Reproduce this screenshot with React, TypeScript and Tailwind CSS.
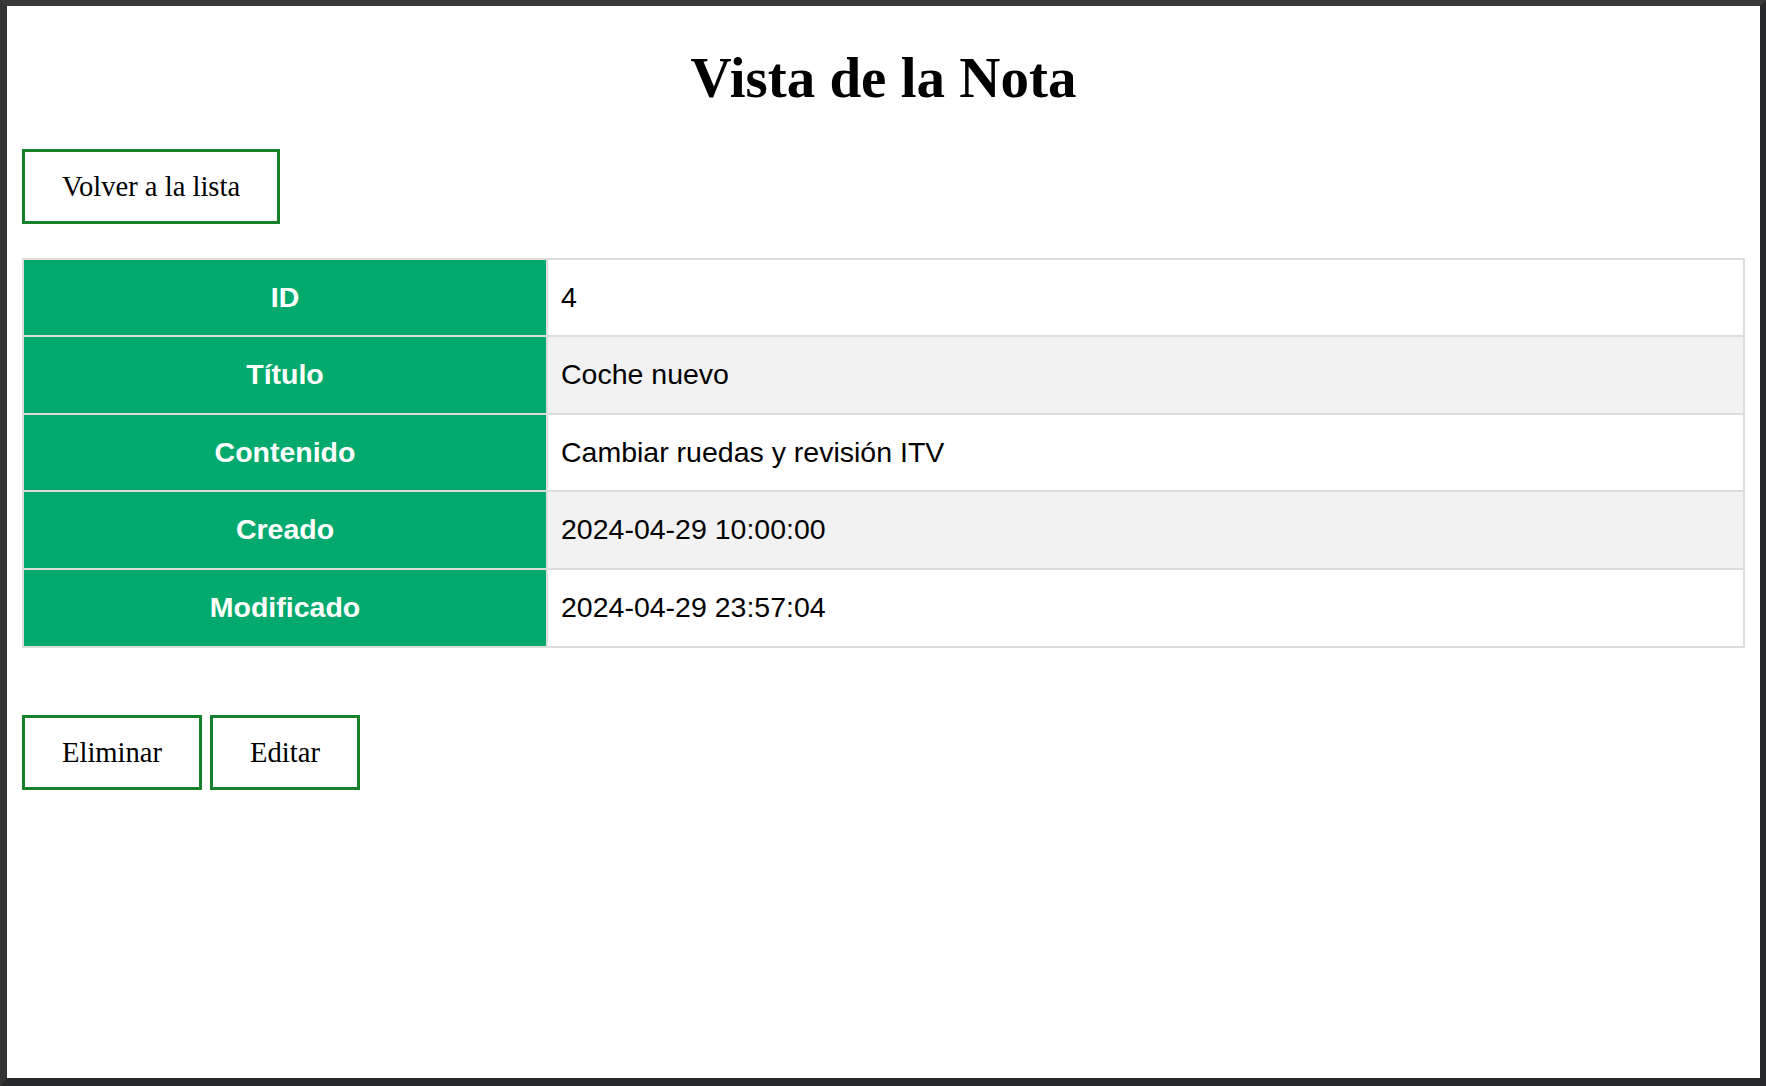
const rows = [
  { label: "ID", value: "4" },
  { label: "Título", value: "Coche nuevo" },
  { label: "Contenido", value: "Cambiar ruedas y revisión ITV" },
  { label: "Creado", value: "2024-04-29 10:00:00" },
  { label: "Modificado", value: "2024-04-29 23:57:04" },
];

const GreenButton = ({ text }: { text: string }) => {
  return (
    <button className="border-[3px] border-[#17802b] bg-white px-[37px] py-[18px] text-[28.6px] leading-[33px] text-black font-['Liberation_Serif',serif]">
      {text}
    </button>
  );
};

export default function App() {
  return (
    <div className="h-[1086px] w-[1766px] bg-[#28292b] border-t-[6px] border-t-[#3a3a3a] border-l-[7px] border-l-[#353535] border-r-[6px] border-r-[#28292b] border-b-[8px] border-b-[#28292b]">
      <div className="h-full w-full bg-white px-[15px] pt-[39px] font-['Liberation_Serif',serif] text-black">
        {/* titulo */}
        <h1 className="text-center text-[57px] font-bold leading-[1.15]">
          Vista de la Nota
        </h1>

        <div className="mt-[38px]">
          <GreenButton text="Volver a la lista" />
        </div>

        <table className="mt-[34px] w-full border-collapse border-2 border-[#dddddd] font-['Liberation_Sans',Arial,sans-serif] text-[28.5px]">
          <tbody>
            {rows.map((row, i) => (
              <tr key={row.label} className={i % 2 == 1 ? "bg-[#f2f2f2]" : "bg-white"}>
                <th className="w-[524px] border-2 border-[#dddddd] bg-[#04aa6d] py-[21px] text-center font-bold leading-[33.6px] text-white">
                  {row.label}
                </th>
                <td className="border-2 border-[#dddddd] px-[13px] py-[21px] text-left leading-[33.6px]">
                  {row.value}
                </td>
              </tr>
            ))}
          </tbody>
        </table>

        <div className="mt-[67px] flex gap-[8px]">
          <GreenButton text="Eliminar" />
          <GreenButton text="Editar" />
        </div>
      </div>
    </div>
  );
}
